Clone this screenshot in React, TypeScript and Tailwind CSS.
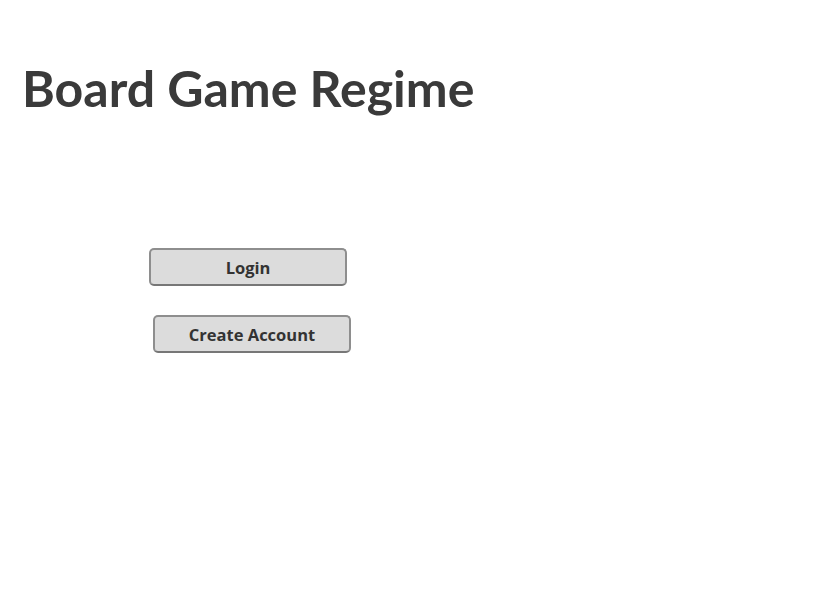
export default function App() {
  return (
    <div className="w-[820px] h-[600px] bg-white relative" style={{ fontFamily: '"Open Sans", sans-serif' }}>
      <div className="pt-[58px] pl-[22px]">
        <h1 className="text-[50px] leading-[60px] font-bold text-[#3a3a3a]" style={{ fontFamily: 'Lato, sans-serif' }}>Board Game Regime</h1>
      </div>
      <div className="flex flex-col items-start mt-[130px]">
        <button className="ml-[149px] w-[198px] h-[38px] pt-[1px] bg-[#dcdcdc] border-2 border-[#8e8e8e] border-b-[#777] rounded-[5px] text-[16.5px] leading-[20px] font-bold text-[#333]">Login</button>
        <button className="ml-[153px] mt-[29px] w-[198px] h-[38px] pt-[1px] bg-[#dcdcdc] border-2 border-[#8e8e8e] border-b-[#777] rounded-[5px] text-[16.5px] leading-[20px] font-bold text-[#333]">Create Account</button>
      </div>
    </div>
  );
}
